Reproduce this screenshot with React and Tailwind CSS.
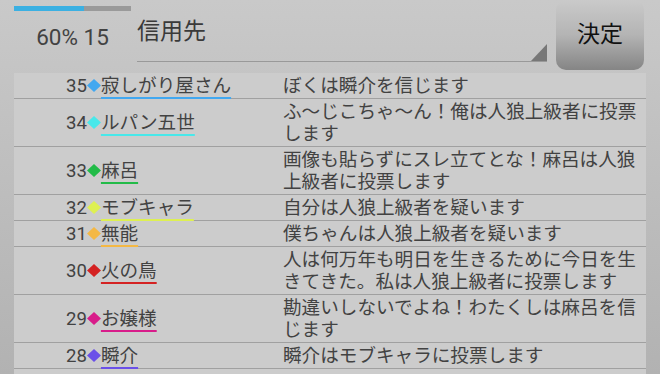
const rows = [
  { n: 35, name: "寂しがり屋さん", color: "#42a8f0", msg: "ぼくは瞬介を信じます" },
  { n: 34, name: "ルパン五世", color: "#48e8ea", msg: "ふ〜じこちゃ〜ん！俺は人狼上級者に投票します" },
  { n: 33, name: "麻呂", color: "#22bb48", msg: "画像も貼らずにスレ立てとな！麻呂は人狼上級者に投票します" },
  { n: 32, name: "モブキャラ", color: "#def052", msg: "自分は人狼上級者を疑います" },
  { n: 31, name: "無能", color: "#f4b844", msg: "僕ちゃんは人狼上級者を疑います" },
  { n: 30, name: "火の鳥", color: "#d42222", msg: "人は何万年も明日を生きるために今日を生きてきた。私は人狼上級者に投票します" },
  { n: 29, name: "お嬢様", color: "#d81c8a", msg: "勘違いしないでよね！わたくしは麻呂を信じます" },
  { n: 28, name: "瞬介", color: "#6a50e8", msg: "瞬介はモブキャラに投票します" },
  { n: 27, name: "", color: "#cccccc", msg: "" },
];

function Diamond({ color }) {
  return (
    <svg width="14" height="13" viewBox="0 0 14 13" className="shrink-0">
      <polygon points="7,0 14,6.5 7,13 0,6.5" fill={color} />
    </svg>
  );
}

export default function App() {
  return (
    <div className="w-[660px] h-[374px] overflow-hidden bg-linear-to-b from-[#c9c9c9] to-[#b2b2b2] text-[#424242] font-[Roboto,'Noto_Sans_CJK_JP',sans-serif]">
      <div className="flex h-[73px]">
        <div className="ml-[14px] w-[117px] flex flex-col items-center">
          <div className="mt-[6px] h-[5px] w-full bg-[#9a9a9a] flex">
            <div className="w-[60%] h-full bg-[#3bb0e2]" />
          </div>
          <div className="mt-[13px] text-[22.5px] leading-[26px] whitespace-nowrap">60% 15</div>
        </div>
        <div className="ml-[6px] w-[410px] h-[62px] relative border-b border-[#999999]">
          <div className="pt-[17px] text-[23px] leading-[30px] text-[#3a3a3a]">信用先</div>
          <svg width="16" height="17" viewBox="0 0 16 17" className="absolute right-0 bottom-0">
            <polygon points="16,0 16,17 0,17" fill="#777777" />
          </svg>
        </div>
        <div className="ml-[9px] w-[88px] h-[70px] rounded-[10px] bg-linear-to-b from-[#cacaca] via-[#b4b4b4] to-[#858585] flex items-center justify-center text-[23px] leading-[30px] text-[#111111]">
          決定
        </div>
      </div>
      <div className="ml-[14px] w-[632px] bg-[#cccccc]">
        {rows.map((r) => (
          <div key={r.n} className="flex border-b border-[#a0a0a0] py-[1.5px] text-[18.6px] leading-[22px]">
            <div className="w-[269px] pl-[52px] flex items-center">
              {r.name && (
                <>
                  <span>{r.n}</span>
                  <Diamond color={r.color} />
                  <span
                    className="underline decoration-2 underline-offset-[5px]"
                    style={{ textDecorationColor: r.color }}
                  >
                    {r.name}
                  </span>
                </>
              )}
            </div>
            <div className="w-[360px] min-h-[22px]">{r.msg}</div>
          </div>
        ))}
      </div>
    </div>
  );
}
